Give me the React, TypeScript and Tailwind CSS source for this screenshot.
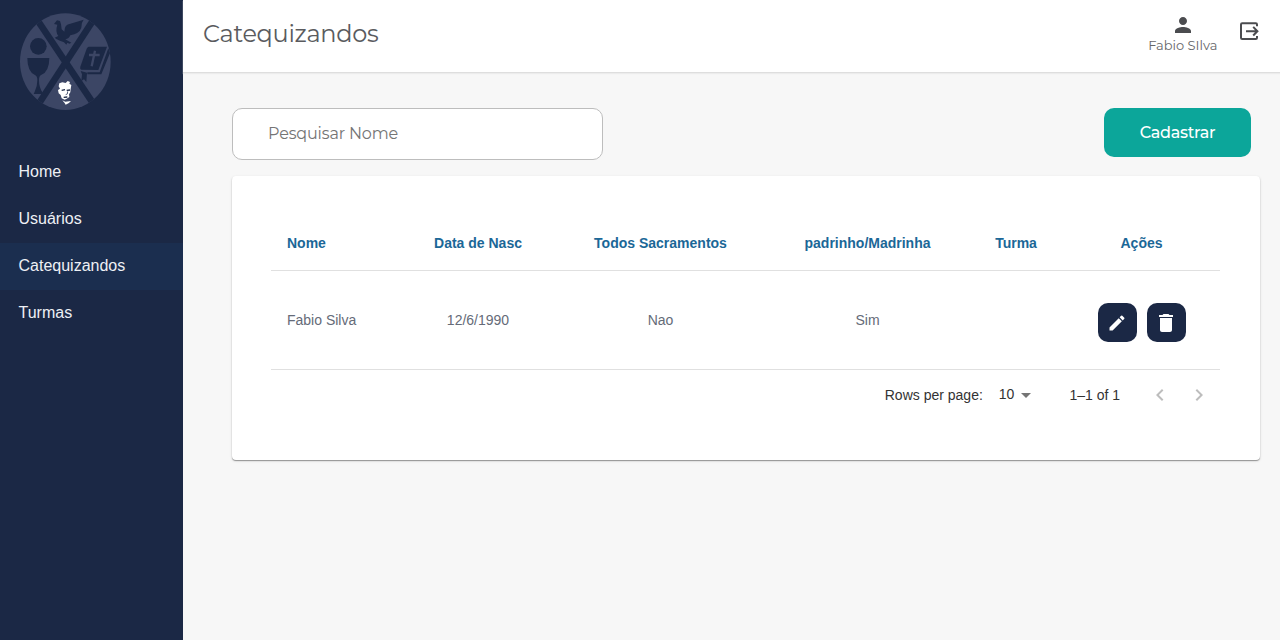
import type { ReactNode } from "react";
import { MdPerson, MdEdit, MdDelete, MdArrowDropDown, MdKeyboardArrowLeft, MdKeyboardArrowRight } from "react-icons/md";

const geometric = "font-[Montserrat,Inter,sans-serif]";

function Logo() {
  return (
    <svg viewBox="0 0 330 330" className="ml-2.5 mt-[5px] block size-[110px]" aria-hidden="true">
      <defs>
        <clipPath id="seal">
          <ellipse cx="166" cy="170" rx="136" ry="145" />
        </clipPath>
      </defs>
      <ellipse cx="166" cy="170" rx="136" ry="145" fill="#3c4665" />
      <g clipPath="url(#seal)" stroke="#1b2845" strokeWidth="20">
        <path d="M82 45 L254 302" />
        <path d="M250 45 L80 306" />
      </g>
      <g fill="#1b2845">
        <path d="M132 57 L141 46 L150 48 L153 58 L155 73 L163 80 Q163 57 181 56 L221 44 Q214 54 215 61 Q215 80 193 88 L181 91 Q177 101 166 103 L184 113 L178 116 L172 113 L169 119 L162 112 Q149 107 139 102 L134 98 L145 93 Q135 80 142 59 Z" />
        <circle cx="85" cy="124" r="25" />
        <path d="M52 159 H118 Q118 202 92 211 Q87 214 87 226 Q87 246 97 262 L99 267 H71 L74 260 Q82 246 82 226 Q82 214 76 211 Q52 201 52 159 Z" />
        <path d="M236 125 H291 L265 195 L214 194 Q209 192 211 185 L230 131 Q232 126 236 125 Z" />
        <path d="M295 130 L300 144 L274 208 H232 V202 H269 Z" />
        <path d="M212 198 L231 203 L229 231 L222 223 L214 228 L216 208 Z" />
      </g>
      <path d="M255 137 L245 184 M237 150 L269 150" fill="none" stroke="#3c4665" strokeWidth="7" />
      <path
        fill="#fff"
        d="M148 235 L157 232 L167 234 L173 228 L180 231 L178 236 L184 240 L182 252 L181 262 L177 268 L178 276 L170 281 L164 284 L155 280 L152 270 L146 265 L144 255 L150 251 L146 244 Z"
      />
      <path d="M157 286 L166 290 L183 288 Q176 297 167 299 Q164 294 157 286 Z" fill="#fff" />
      <path d="M155 256 L165 254 M170 256 L180 255 M161 277 L172 276" fill="none" stroke="#1b2845" strokeWidth="4" />
      <path d="M173 259 L172 267 L167 269" fill="none" stroke="#5c6580" strokeWidth="3" />
    </svg>
  );
}

function ExitIcon() {
  return (
    <svg viewBox="0 0 20 20" className="size-5" fill="none" stroke="#4b4c4f" strokeWidth="2" aria-hidden="true">
      <path d="M18 5.2 V3.5 Q18 2.3 16.8 2.3 H3.2 Q2 2.3 2 3.5 V16.8 Q2 18 3.2 18 H16.8 Q18 18 18 16.8 V15.1" />
      <path d="M7 10.2 H18.4 M14.2 5.9 L18.4 10.2 L14.2 14.5" />
    </svg>
  );
}

function NavItem({ label, active = false }: { label: string; active?: boolean }) {
  return (
    <a href="#" className={`flex h-[47px] items-center pl-[18.5px] text-base text-[#eef0f5] ${active ? "bg-[#1b2e4f]" : ""}`}>
      {label}
    </a>
  );
}

function ActionButton({ label, children }: { label: string; children: ReactNode }) {
  return (
    <button aria-label={label} className="flex size-[39px] items-center justify-center rounded-[10px] bg-[#1b2845] text-white">
      {children}
    </button>
  );
}

export default function App() {
  return (
    <div className="flex h-screen w-full overflow-hidden bg-[#f7f7f7] font-['Liberation_Sans',Arial,sans-serif]">
      <aside className="w-[183px] shrink-0 bg-[#1b2845]">
        <Logo />
        <nav className="mt-[33.5px]">
          <NavItem label="Home" />
          <NavItem label="Usuários" />
          <NavItem label="Catequizandos" active />
          <NavItem label="Turmas" />
        </nav>
      </aside>

      <div className="min-w-0 flex-1">
        <header className="flex h-[73px] justify-between border-b border-[#dedede] bg-white pl-5 pr-[21px] shadow-[0_1px_1px_#ececec]">
          <h1 className={`${geometric} mt-4 text-[24px] font-normal leading-9 tracking-[-0.3px] text-[#5a5b5e]`}>Catequizandos</h1>
          <div className="flex">
            <div className="mr-[21.5px] mt-[13px] flex flex-col items-center">
              <MdPerson className="ml-px size-6 text-[#4b4c4f]" />
              <span className={`${geometric} text-[13px] leading-4 text-[#66676a]`}>Fabio SIlva</span>
            </div>
            <div className="mt-[21px]"><ExitIcon /></div>
          </div>
        </header>

        <main className="pl-[49px] pr-5 pt-[34px]">
          <div className="flex justify-between pr-[9px]">
            <input
              placeholder="Pesquisar Nome"
              className={`${geometric} mt-px h-[52px] w-[371px] rounded-[10px] border border-[#bdbdbd] bg-white px-[35px] pb-0.5 text-base tracking-[-0.15px] text-[#555] placeholder:text-[#757575]`}
            />
            <button className={`${geometric} mt-px h-[49px] w-[147px] rounded-[10px] bg-[#0ca69a] text-base font-medium tracking-[-0.25px] text-white`}>
              Cadastrar
            </button>
          </div>

          <section className="mt-4 h-[284px] rounded bg-white pl-[39px] pr-10 pt-[38px] shadow-[0_1px_1px_rgba(0,0,0,0.35),0_1px_3px_rgba(0,0,0,0.12)]">
            <table className="w-full table-fixed border-collapse text-center text-sm">
              <colgroup>
                <col className="w-[127px]" />
                <col className="w-[160px]" />
                <col className="w-[205px]" />
                <col className="w-[209px]" />
                <col className="w-[88px]" />
                <col />
              </colgroup>
              <thead className="text-[#1b6797]">
                <tr className="h-[56px] border-b border-[#e0e0e0]">
                  <th className="pl-4 pt-[3px] text-left">Nome</th>
                  <th className="pt-[3px]">Data de Nasc</th>
                  <th className="pt-[3px]">Todos Sacramentos</th>
                  <th className="pt-[3px]">padrinho/Madrinha</th>
                  <th className="pt-[3px]">Turma</th>
                  <th className="pl-[3px] pt-[3px]">Ações</th>
                </tr>
              </thead>
              <tbody className="text-[#656b78]">
                <tr className="h-[99px] border-b border-[#e0e0e0]">
                  <td className="pl-4 text-left">Fabio Silva</td>
                  <td>12/6/1990</td>
                  <td>Nao</td>
                  <td>Sim</td>
                  <td />
                  <td className="pl-[3px]">
                    <div className="mt-1.5 flex justify-center gap-2.5">
                      <ActionButton label="Editar"><MdEdit className="size-5" /></ActionButton>
                      <ActionButton label="Excluir"><MdDelete className="size-6" /></ActionButton>
                    </div>
                  </td>
                </tr>
              </tbody>
            </table>
            <div className="flex h-[51px] items-center justify-end text-sm text-[#333]">
              <span>Rows per page:</span>
              <button className="-mt-0.5 ml-4 flex items-center">
                10 <MdArrowDropDown className="mt-0.5 size-6 text-[#757575]" />
              </button>
              <span className="ml-[31px]">1–1 of 1</span>
              <MdKeyboardArrowLeft className="ml-[28px] size-6 text-[#bdbdbd]" />
              <MdKeyboardArrowRight className="ml-[15px] mr-[9px] size-6 text-[#bdbdbd]" />
            </div>
          </section>
        </main>
      </div>
    </div>
  );
}
